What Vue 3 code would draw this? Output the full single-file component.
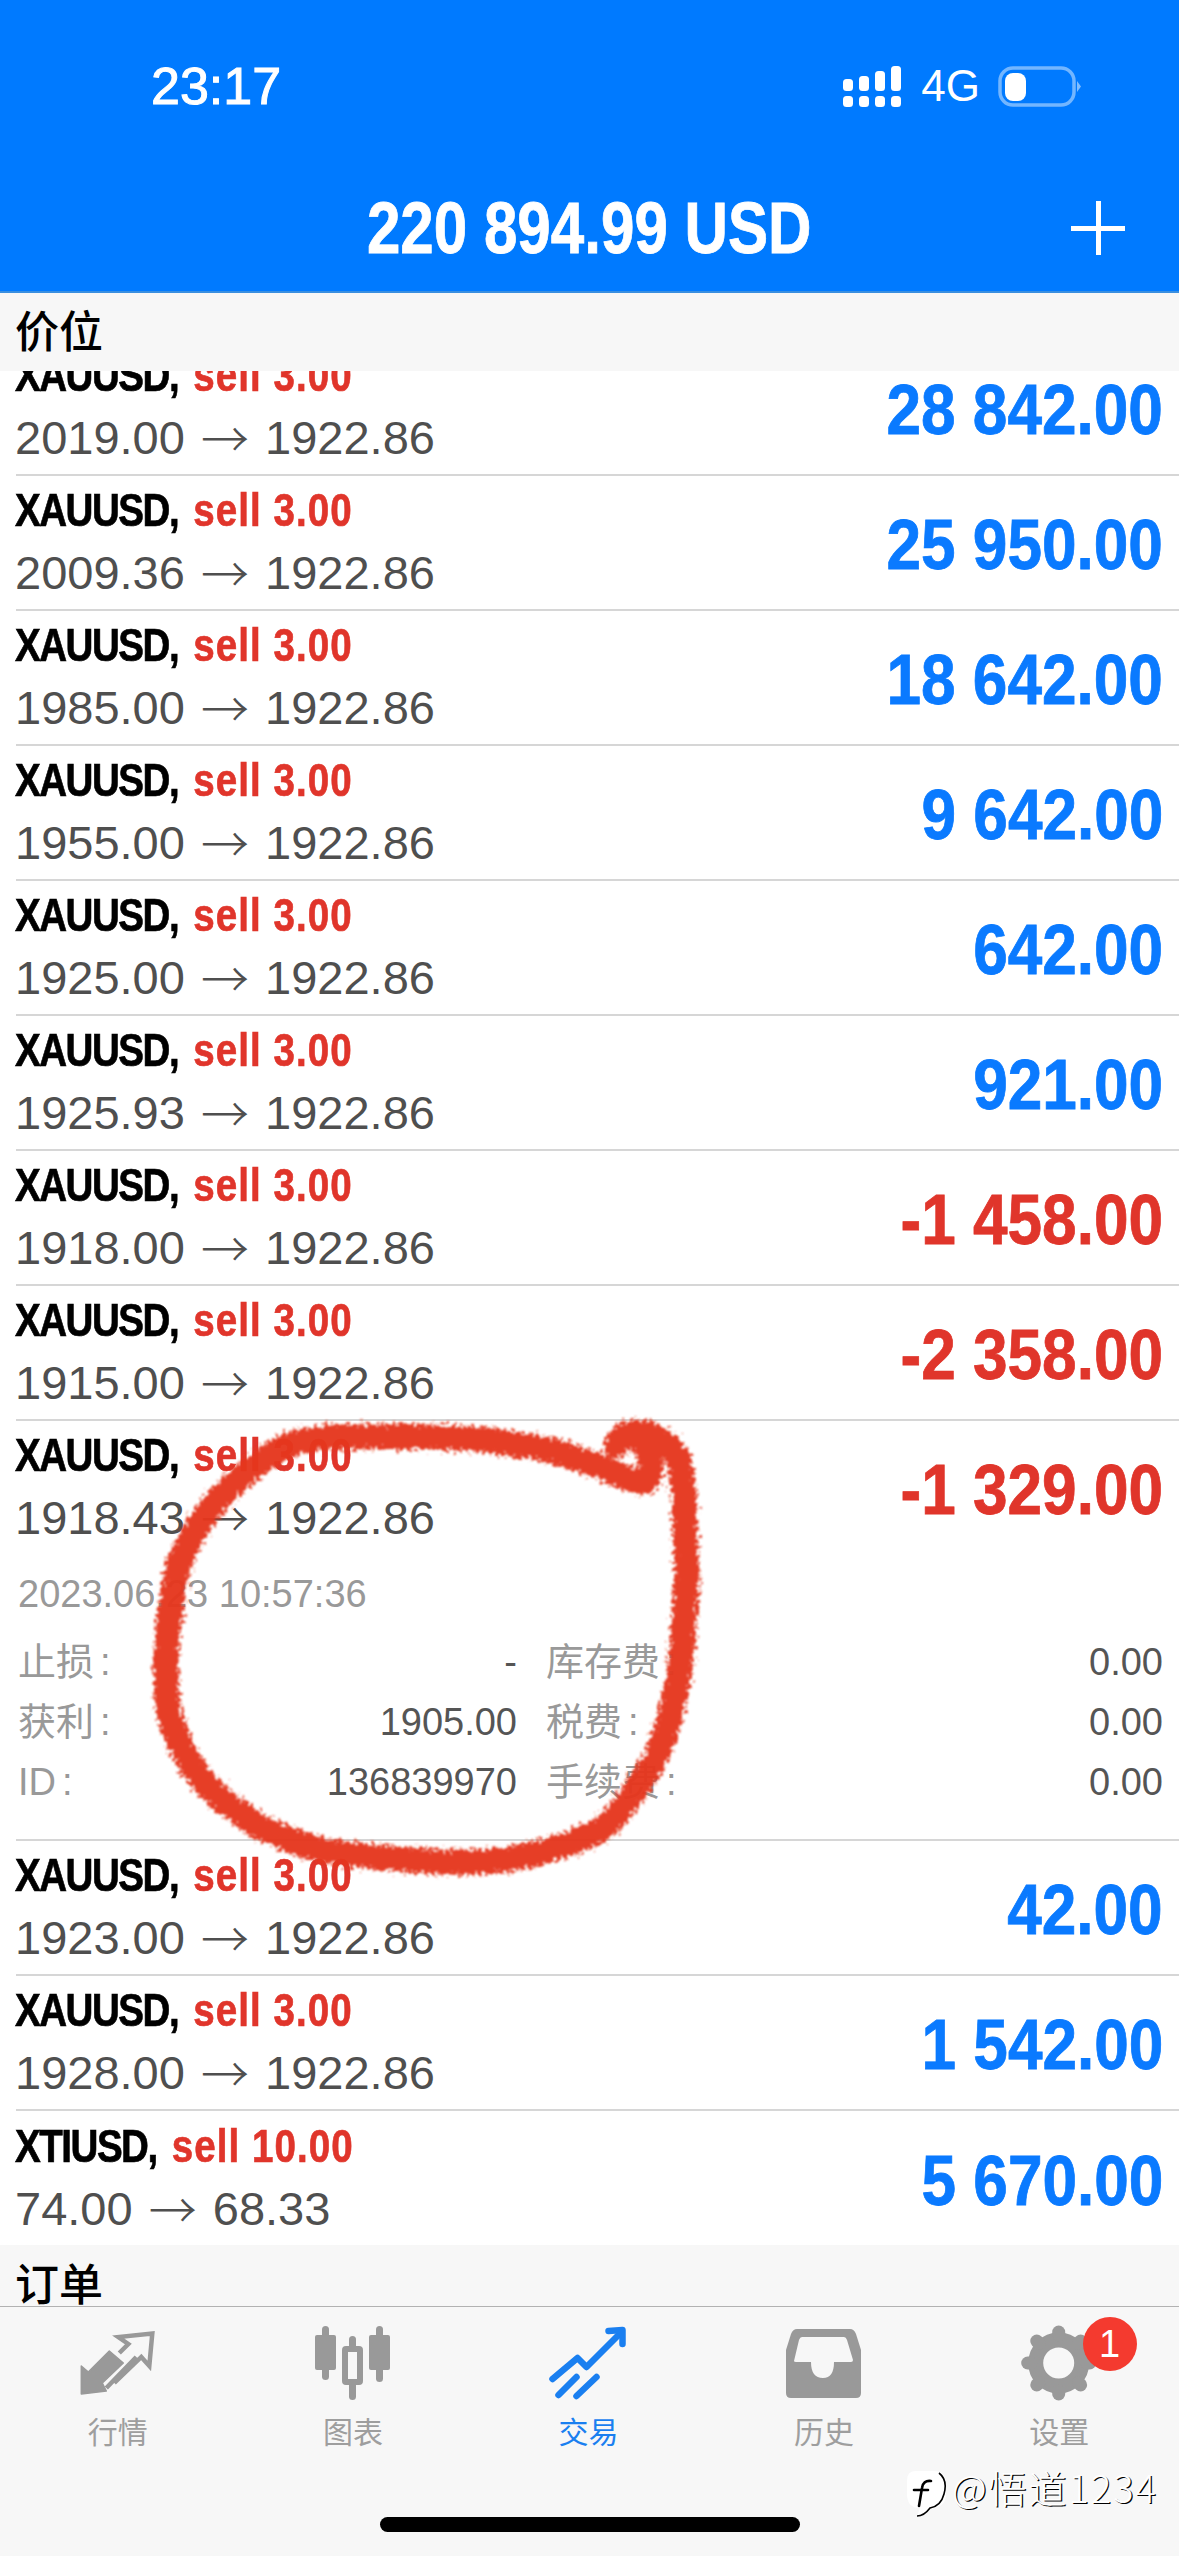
<script setup>
const positions = [
  { sym: 'XAUUSD', vol: '3.00', from: '2019.00', to: '1922.86', profit: '28 842.00' },
  { sym: 'XAUUSD', vol: '3.00', from: '2009.36', to: '1922.86', profit: '25 950.00' },
  { sym: 'XAUUSD', vol: '3.00', from: '1985.00', to: '1922.86', profit: '18 642.00' },
  { sym: 'XAUUSD', vol: '3.00', from: '1955.00', to: '1922.86', profit: '9 642.00' },
  { sym: 'XAUUSD', vol: '3.00', from: '1925.00', to: '1922.86', profit: '642.00' },
  { sym: 'XAUUSD', vol: '3.00', from: '1925.93', to: '1922.86', profit: '921.00' },
  { sym: 'XAUUSD', vol: '3.00', from: '1918.00', to: '1922.86', profit: '-1 458.00', loss: true },
  { sym: 'XAUUSD', vol: '3.00', from: '1915.00', to: '1922.86', profit: '-2 358.00', loss: true },
  {
    sym: 'XAUUSD', vol: '3.00', from: '1918.43', to: '1922.86', profit: '-1 329.00', loss: true,
    time: '2023.06.23 10:57:36',
    details: [
      ['止损', '-', '库存费', '0.00'],
      ['获利', '1905.00', '税费', '0.00'],
      ['ID', '136839970', '手续费', '0.00'],
    ],
  },
  { sym: 'XAUUSD', vol: '3.00', from: '1923.00', to: '1922.86', profit: '42.00' },
  { sym: 'XAUUSD', vol: '3.00', from: '1928.00', to: '1922.86', profit: '1 542.00' },
  { sym: 'XTIUSD', vol: '10.00', from: '74.00', to: '68.33', profit: '5 670.00' },
]

const signal = [
  { x: 26, top: 30 },
  { x: 42, top: 27 },
  { x: 58, top: 22 },
  { x: 74, top: 17 },
]

const gearTeeth = [0, 45, 90, 135, 180, 225, 270, 315]

const circlePath =
  'M294 1443 C320 1436 345 1436 367 1437 C400 1436 430 1436 459 1438 C495 1440 525 1446 551 1450 C570 1456 585 1462 600 1466 C615 1474 632 1482 645 1482 C655 1474 652 1455 640 1440 C628 1432 618 1438 616 1446 C622 1424 662 1428 679 1460 C686 1490 684 1510 685 1533 C689 1570 686 1600 683 1633 C682 1665 677 1690 670 1717 C663 1745 654 1765 640 1783 C626 1805 613 1822 597 1832 C565 1847 535 1855 505 1860 C475 1863 445 1863 413 1860 C380 1858 350 1855 321 1850 C295 1843 274 1834 256 1825 C236 1810 216 1797 201 1779 C186 1760 176 1738 170 1717 C165 1690 165 1660 168 1633 C170 1610 173 1590 178 1567 C184 1550 191 1538 200 1523 C212 1505 226 1490 241 1477 C259 1462 276 1450 294 1443'
</script>

<template>
  <div class="screen">
    <header class="top">
      <div class="status">
        <span class="clock">23:17</span>
        <div class="status-right">
          <svg class="signal" viewBox="26 17 58 41" width="58" height="41">
            <g v-for="s in signal" :key="s.x" fill="#fff">
              <rect :x="s.x" :y="s.top" width="10" :height="42 - s.top" rx="3.5" />
              <rect :x="s.x" y="47" width="10" height="11" rx="3.5" />
            </g>
          </svg>
          <span class="net">4G</span>
          <svg class="battery" viewBox="178 16 84 43" width="84" height="43">
            <rect x="180" y="19" width="74" height="37" rx="13" fill="none" stroke="#fff" stroke-opacity="0.45" stroke-width="3.5" />
            <rect x="185" y="24" width="21" height="28" rx="8" fill="#fff" />
            <path d="M257 32 L261 37.5 L257 43 Z" fill="#fff" fill-opacity="0.5" />
          </svg>
        </div>
      </div>
      <div class="title-row">
        <span></span>
        <h1 class="balance">220 894.99 USD</h1>
        <span class="plus"></span>
      </div>
    </header>

    <div class="section section-first">价位</div>

    <div class="list">
      <div class="rows">
        <div v-for="(p, i) in positions" :key="i" class="row">
          <div class="row-main">
            <div class="row-text">
              <div class="row-title">
                <span class="sym">{{ p.sym }},</span>
                <span class="side"> sell {{ p.vol }}</span>
              </div>
              <div class="prices">{{ p.from }} <span class="arrow">→</span> {{ p.to }}</div>
            </div>
            <span class="profit" :class="{ loss: p.loss }">{{ p.profit }}</span>
          </div>
          <div v-if="p.details" class="details">
            <div class="time">{{ p.time }}</div>
            <div v-for="d in p.details" :key="d[0]" class="detail-row">
              <div class="cell"><span class="lbl">{{ d[0] }}<i>:</i></span><span class="val">{{ d[1] }}</span></div>
              <div class="cell"><span class="lbl">{{ d[2] }}<i>:</i></span><span class="val">{{ d[3] }}</span></div>
            </div>
          </div>
        </div>
      </div>
    </div>

    <div class="section section-second">订单</div>

    <nav class="tabs">
      <div class="tab">
        <svg viewBox="17.7 5 80 78" width="80" height="78">
          <path d="M21 74 L21 46 L28 52 L49 31 L63 43 L42 63 L46 71 Z" fill="#999" stroke="#999" stroke-width="1.5" stroke-linejoin="round" />
          <path d="M59 33 L68 24 L58 17 L92 13.5 L89 46 L81 37 L54 63 M46 68 L76 37" fill="none" stroke="#999" stroke-width="4.5" />
        </svg>
        <span>行情</span>
      </div>
      <div class="tab">
        <svg viewBox="253 5 80 78" width="80" height="78">
          <g fill="#999">
            <rect x="262" y="6" width="7" height="54" rx="3.5" />
            <rect x="255" y="15" width="21" height="35" rx="2" />
            <rect x="316" y="6" width="7" height="56" rx="3.5" />
            <rect x="309" y="15" width="21" height="35" rx="2" />
            <rect x="289" y="16" width="7" height="64" rx="3.5" />
          </g>
          <rect x="285" y="29" width="15" height="33" rx="1" fill="#f7f7f7" stroke="#999" stroke-width="6" />
        </svg>
        <span>图表</span>
      </div>
      <div class="tab active">
        <svg viewBox="18.5 5 80 78" width="80" height="78" fill="none" stroke="#1a7ff0" stroke-width="6.5" stroke-linecap="round" stroke-linejoin="round">
          <path d="M23 59 L48 38 L57 47 L92 12" />
          <path d="M79 11 L93 10 L93 24" />
          <path d="M29 75 L47 57 M47 76 L67 57" />
        </svg>
        <span>交易</span>
      </div>
      <div class="tab">
        <svg viewBox="14 5 80 78" width="80" height="78">
          <path fill="#999" fill-rule="evenodd" d="M27 9 H80 Q84 9 86 14 L91 30 V73 Q91 78 86 78 H21 Q16 78 16 73 V30 L21 14 Q23 9 27 9 Z M32 17 Q30 17 29 20 L24 41 Q24 42 26 42 H41 Q41 58 53 58 Q64 58 64 42 H81 Q83 42 83 40 L77 20 Q76 17 74 17 Z" />
        </svg>
        <span>历史</span>
      </div>
      <div class="tab">
        <svg viewBox="249.3 5 80 78" width="80" height="78">
          <circle cx="289" cy="43" r="23" fill="none" stroke="#999" stroke-width="15" />
          <line
            v-for="a in gearTeeth"
            :key="a"
            x1="289"
            y1="15"
            x2="289"
            y2="12"
            stroke="#999"
            stroke-width="13"
            stroke-linecap="round"
            :transform="`rotate(${a} 289 43)`"
          />
        </svg>
        <span>设置</span>
        <b class="badge">1</b>
      </div>
    </nav>

    <div class="home-bar"></div>

    <!-- hand-drawn circle sits over the list -->
    <svg class="scribble" viewBox="0 0 1179 2556" width="1179" height="2556">
      <defs>
        <filter id="rough" x="-5%" y="-5%" width="110%" height="110%">
          <feTurbulence type="fractalNoise" baseFrequency="0.28" numOctaves="3" seed="4" result="noise" />
          <feDisplacementMap in="SourceGraphic" in2="noise" scale="16" xChannelSelector="R" yChannelSelector="G" result="moved" />
          <feGaussianBlur in="moved" stdDeviation="0.8" />
        </filter>
      </defs>
      <path :d="circlePath" fill="none" stroke="#e5371d" stroke-width="25" stroke-linecap="round" stroke-linejoin="round" stroke-opacity="0.96" filter="url(#rough)" />
    </svg>

    <div class="mark">
      <svg viewBox="0 0 42 48" width="42" height="48">
        <path d="M10 1 H28 Q40 1 40 14 V24 Q40 38 24 38 Q18 46 11 46 L14 38 Q1 38 1 24 V10 Q1 1 10 1 Z" fill="#fff" />
        <path d="M33 3 Q42 10 38 24 Q35 36 24 38 Q18 46 11 46" fill="none" stroke="#000" stroke-width="1.6" />
        <path d="M25 11 Q17 10 16 18 L13 36 M8 20 H22" fill="none" stroke="#000" stroke-width="2.6" stroke-linecap="round" />
      </svg>
      <span>@悟道1234</span>
    </div>
  </div>
</template>

<style>
html, body {
  margin: 0;
  background: #fff;
}
</style>

<style scoped>
.screen {
  position: relative;
  width: 1179px;
  height: 2556px;
  overflow: hidden;
  display: flex;
  flex-direction: column;
  font-family: "Liberation Sans", "Noto Sans CJK SC", sans-serif;
  background: #fff;
}

.top {
  height: 293px;
  flex: none;
  box-sizing: border-box;
  background: #007aff;
  border-bottom: 2px solid #3a8fe0;
  color: #fff;
}

.status {
  height: 116px;
  padding: 56px 97px 0 151px;
  box-sizing: border-box;
  display: flex;
  justify-content: space-between;
  align-items: center;
}

.clock {
  font-size: 52px;
  line-height: 60px;
  -webkit-text-stroke: 1px #fff;
}

.status-right {
  display: flex;
  align-items: center;
  gap: 20px;
}

.battery {
  margin-left: -2px;
}

.net {
  font-size: 44px;
  line-height: 50px;
}

.title-row {
  margin-top: 72px;
  display: grid;
  grid-template-columns: 1fr auto 1fr;
  align-items: center;
}

.balance {
  margin: 0;
  font-size: 72px;
  line-height: 80px;
  font-weight: 700;
  white-space: nowrap;
  transform: scaleX(0.835);
  -webkit-text-stroke: 0.8px #fff;
}

.plus {
  justify-self: end;
  margin-right: 54px;
  width: 54px;
  height: 54px;
  background:
    linear-gradient(#fff, #fff) center / 54px 5px no-repeat,
    linear-gradient(#fff, #fff) center / 5px 54px no-repeat;
}

.section {
  flex: none;
  background: #f7f7f7;
  padding-left: 15px;
  font-family: "Noto Sans CJK SC", sans-serif;
  font-size: 44px;
  font-weight: 500;
  color: #000;
  overflow: hidden;
}

.section-first {
  height: 78px;
  line-height: 72px;
}

.section-second {
  height: 62px;
  line-height: 75px;
  box-sizing: border-box;
  border-bottom: 1px solid #b2b2b2;
}

.list {
  flex: 1;
  min-height: 0;
  overflow: hidden;
}

.rows {
  margin-top: -30px;
}

.row {
  margin-left: 16px;
  border-bottom: 2px solid #d6d6d6;
}

.row:last-child {
  border-bottom: none;
}

.row-main {
  height: 133px;
  margin-left: -1px;
  padding-right: 16px;
  display: flex;
  justify-content: space-between;
  align-items: center;
}

.row:last-child .row-main {
  height: 135px;
}

.row-text {
  padding-bottom: 3px;
}

.row-title {
  font-size: 47px;
  line-height: 62px;
  font-weight: 700;
  white-space: pre;
  transform: scaleX(0.82);
  transform-origin: left center;
  -webkit-text-stroke: 0.7px currentColor;
}

.sym {
  color: #000;
  letter-spacing: -1.8px;
}

.side {
  margin-left: 4px;
  color: #e0352b;
  letter-spacing: 1.3px;
}

.prices {
  font-size: 47px;
  line-height: 63px;
  height: 63px;
  color: #4f4f4f;
  white-space: nowrap;
}

.arrow {
  display: inline-block;
  width: 54px;
  font-family: "Noto Sans CJK SC", sans-serif;
  font-size: 48px;
  font-weight: 300;
  line-height: 40px;
  text-align: center;
  vertical-align: -3px;
}

.profit {
  padding-top: 4px;
  font-size: 71px;
  font-weight: 700;
  color: #0a7aff;
  white-space: nowrap;
  transform: scaleX(0.875);
  transform-origin: right center;
  -webkit-text-stroke: 0.8px currentColor;
}

.profit.loss {
  color: #e0352b;
}

.details {
  padding: 21px 0 27px 2px;
  font-size: 38px;
}

.time {
  line-height: 38px;
  margin-bottom: 19px;
  color: #999;
}

.detail-row {
  height: 60px;
  display: grid;
  grid-template-columns: 499px 1fr;
  column-gap: 29px;
  padding-right: 16px;
  align-items: center;
}

.cell {
  display: flex;
  justify-content: space-between;
  line-height: 60px;
}

.lbl {
  color: #999;
  font-size: 38px;
}

.lbl i {
  font-style: normal;
  margin-left: 6px;
}

.val {
  color: #555;
}

.tabs {
  flex: none;
  height: 249px;
  box-sizing: border-box;
  padding: 18px 2px 0 0;
  background: #f7f7f7;
  display: grid;
  grid-template-columns: repeat(5, 1fr);
}

.tab {
  position: relative;
  display: flex;
  flex-direction: column;
  align-items: center;
  font-family: "Noto Sans CJK SC", sans-serif;
  font-size: 30px;
  color: #9e9e9e;
}

.tab span {
  margin-top: 7px;
  line-height: 40px;
}

.tab.active {
  color: #1a7ff0;
}

.badge {
  position: absolute;
  left: 141px;
  top: -8px;
  width: 54px;
  height: 54px;
  border-radius: 50%;
  background: #f43a2f;
  color: #fff;
  font-family: "Liberation Sans", sans-serif;
  font-size: 38px;
  font-weight: 400;
  line-height: 54px;
  text-align: center;
}

.home-bar {
  position: absolute;
  left: 380px;
  top: 2517px;
  width: 420px;
  height: 15px;
  border-radius: 8px;
  background: #000;
}

.scribble {
  position: absolute;
  left: 0;
  top: 0;
  pointer-events: none;
}

.mark {
  position: absolute;
  left: 906px;
  top: 2464px;
  display: flex;
  align-items: flex-start;
  gap: 4px;
  color: #fff;
  font-family: "Noto Sans CJK SC", sans-serif;
  font-size: 38px;
  font-weight: 300;
  line-height: 46px;
  letter-spacing: 2px;
  white-space: nowrap;
  text-shadow: 1.2px 0.8px 0 #000;
}

.mark svg {
  margin-top: 6px;
}
</style>
